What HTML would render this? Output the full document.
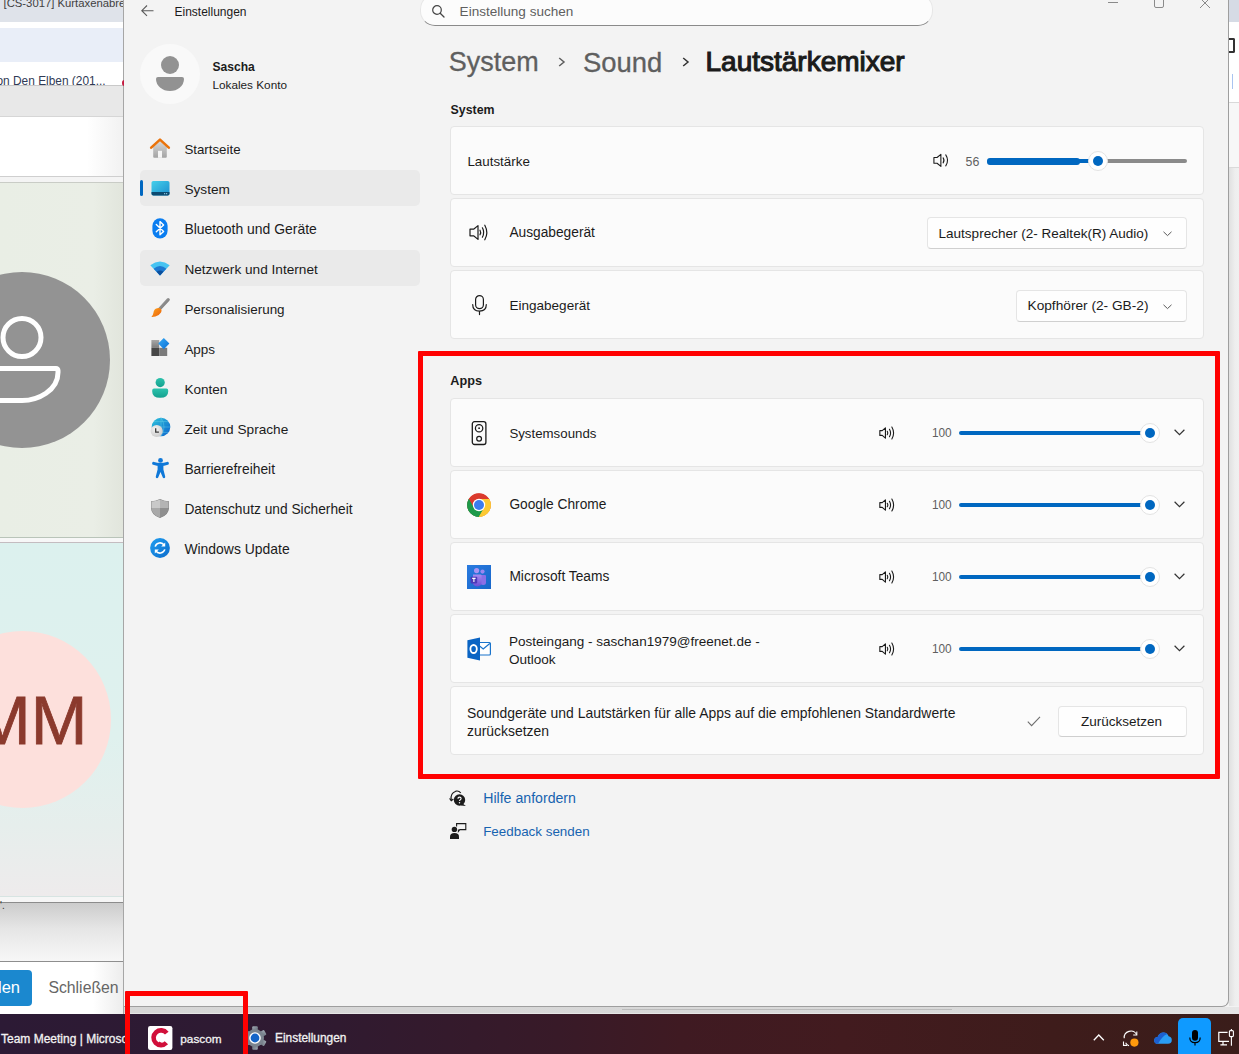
<!DOCTYPE html><html><head><meta charset="utf-8"><style>
html,body{margin:0;padding:0}
body{width:1239px;height:1054px;position:relative;overflow:hidden;background:#f3f3f3;font-family:"Liberation Sans",sans-serif}
.t{position:absolute;white-space:nowrap}
svg{overflow:visible}
</style></head><body>

<div style="position:absolute;left:0px;top:0px;width:124px;height:22px;background:#dfe3ea"></div>
<div class="t" style="left:3.50px;top:-2.07px;font-size:11.30px;line-height:11.30px;color:#3f3f3f;font-weight:400;font-family:'Liberation Sans', sans-serif;">[CS-3017] Kurtaxenabrechnung</div>
<div style="position:absolute;left:0px;top:22px;width:124px;height:6px;background:#ffffff"></div>
<div style="position:absolute;left:0px;top:28px;width:124px;height:34px;background:#e9eef8"></div>
<div style="position:absolute;left:0px;top:62px;width:124px;height:24px;background:#ffffff"></div>
<div class="t" style="left:-3.50px;top:75.73px;font-size:11.90px;line-height:11.90px;color:#2f3a55;font-weight:400;font-family:'Liberation Sans', sans-serif;">on Den Elben (201...</div>
<div style="position:absolute;left:0px;top:85px;width:124px;height:1px;background:#c9c9c9"></div>
<div style="position:absolute;left:0px;top:86px;width:124px;height:30px;background:#e8e8e8"></div>
<div style="position:absolute;left:0px;top:116px;width:124px;height:1px;background:#d6d6d6"></div>
<div style="position:absolute;left:0px;top:117px;width:124px;height:60px;background:linear-gradient(90deg,#ffffff 70%,#f1f1f1)"></div>
<div style="position:absolute;left:0px;top:176px;width:124px;height:1px;background:#cfcfcf"></div>
<div style="position:absolute;left:0px;top:177px;width:124px;height:5px;background:#f4f4f4"></div>
<div style="position:absolute;left:0px;top:182px;width:124px;height:1px;background:#c9ccc6"></div>
<div style="position:absolute;left:0px;top:183px;width:124px;height:354px;background:linear-gradient(90deg,#e9eee5 0%,#eaeee6 75%,#e1e5dc 100%)"></div>
<div style="position:absolute;left:-66px;top:272px;width:176px;height:176px;border-radius:50%;background:#939393"></div>
<svg style="position:absolute;left:-30px;top:310px" width="100" height="110" viewBox="0 0 100 110"><circle cx="52" cy="27.5" r="19" fill="none" stroke="#fff" stroke-width="5"/><path d="M-10 58.5 H86 a2 2 0 0 1 2 2 v2 c0 18 -20 28 -36 28 H-10" fill="none" stroke="#fff" stroke-width="5"/></svg>
<div style="position:absolute;left:0px;top:537px;width:124px;height:1px;background:#b9c4b9"></div>
<div style="position:absolute;left:0px;top:538px;width:124px;height:4px;background:#f7f7f7"></div>
<div style="position:absolute;left:0px;top:542px;width:124px;height:1px;background:#c4bcc0"></div>
<div style="position:absolute;left:0px;top:543px;width:124px;height:353px;background:linear-gradient(180deg,#dcf1ee 0%,#dff1ee 55%,#e6eeec 80%,#eeebec 100%)"></div>
<div style="position:absolute;left:-66px;top:631px;width:177px;height:177px;border-radius:50%;background:#fde0dc"></div>
<div class="t" style="left:-26.00px;top:685.74px;font-size:68.00px;line-height:68.00px;color:#8b3a2d;font-weight:400;font-family:'Liberation Sans', sans-serif;-webkit-text-stroke:0.8px #8b3a2d;">MM</div>
<div style="position:absolute;left:0px;top:896px;width:124px;height:1px;background:#d7e4e2"></div>
<div style="position:absolute;left:0px;top:897px;width:124px;height:5px;background:#f6f6f6"></div>
<div style="position:absolute;left:0px;top:902px;width:124px;height:1px;background:#8c8c8c"></div>
<div style="position:absolute;left:0px;top:903px;width:124px;height:58px;background:linear-gradient(180deg,#cccccc 0%,#e6e6e6 45%,#f7f7f7 100%)"></div>
<div class="t" style="left:0.00px;top:900.53px;font-size:10.00px;line-height:10.00px;color:#333;font-weight:400;font-family:'Liberation Sans', sans-serif;">'.</div>
<div style="position:absolute;left:0px;top:961px;width:124px;height:1px;background:#8e8e8e"></div>
<div style="position:absolute;left:0px;top:962px;width:124px;height:52px;background:linear-gradient(90deg,#ffffff 75%,#ececec 100%)"></div>
<div style="position:absolute;left:-10px;top:970px;width:42px;height:36px;border-radius:4px;background:#1b88cf"></div>
<div class="t" style="left:-2.00px;top:979.03px;font-size:16.50px;line-height:16.50px;color:#ffffff;font-weight:400;font-family:'Liberation Sans', sans-serif;">len</div>
<div class="t" style="left:48.40px;top:979.63px;font-size:15.80px;line-height:15.80px;color:#666666;font-weight:400;font-family:'Liberation Sans', sans-serif;">Schließen</div>
<div style="position:absolute;left:123px;top:0px;width:1px;height:1014px;background:#a6a6a6"></div>
<div style="position:absolute;left:121.5px;top:79.5px;width:5px;height:6.5px;border-radius:50%;background:#c41a40"></div>
<div style="position:absolute;left:1229px;top:0px;width:10px;height:22px;background:#d6dbe5"></div>
<div style="position:absolute;left:1229px;top:22px;width:10px;height:80px;background:#ffffff"></div>
<div style="position:absolute;left:1229px;top:102px;width:10px;height:1px;background:#d9d9d9"></div>
<div style="position:absolute;left:1229px;top:103px;width:10px;height:64px;background:#f7f7f7"></div>
<div style="position:absolute;left:1229px;top:167px;width:10px;height:1px;background:#dadada"></div>
<div style="position:absolute;left:1229px;top:168px;width:10px;height:838px;background:linear-gradient(90deg,#e0e0e0,#eeeeee 60%,#f0f0f0)"></div>
<div style="position:absolute;left:1228px;top:38px;width:5px;height:11px;border:2px solid #333;border-left:none;border-radius:0 2px 2px 0"></div>
<div style="position:absolute;left:1232px;top:74px;width:1px;height:15px;background:#a9c4f0"></div>
<div style="position:absolute;left:124px;top:1007px;width:1115px;height:7px;background:linear-gradient(90deg,#d6d6d6 0%,#d9d9d9 80%,#e6e6e6 100%)"></div>
<div style="position:absolute;left:124px;top:1013px;width:1115px;height:1px;background:#e6e6e6"></div>
<div style="position:absolute;left:622px;top:1009px;width:330px;height:1px;background:#bcbcbc"></div>
<div style="position:absolute;left:124px;top:-20px;width:1104px;height:1026px;background:#f3f3f3;border-right:1px solid #9e9e9e;border-bottom:1px solid #9e9e9e;border-radius:0 0 7px 0"></div>
<svg style="position:absolute;left:141px;top:5px" width="13" height="12" viewBox="0 0 13 12"><path d="M6 0.5 L0.8 5.7 L6 10.9 M0.8 5.7 H12.5" fill="none" stroke="#5a5a5a" stroke-width="1.1"/></svg>
<div class="t" style="left:174.50px;top:5.85px;font-size:11.99px;line-height:11.99px;color:#1b1b1b;font-weight:400;font-family:'Liberation Sans', sans-serif;">Einstellungen</div>
<div style="position:absolute;left:1108px;top:2px;width:10px;height:1px;background:#8a8a8a"></div>
<div style="position:absolute;left:1154px;top:-4px;width:8px;height:10px;border:1px solid #8a8a8a;border-radius:2px"></div>
<svg style="position:absolute;left:1200px;top:-2px" width="10" height="10" viewBox="0 0 10 10"><path d="M0 0 L10 10 M10 0 L0 10" fill="none" stroke="#8a8a8a" stroke-width="1"/></svg>
<div style="position:absolute;left:140px;top:44px;width:60px;height:60px;border-radius:50%;background:#f9f9f9"></div>
<div style="position:absolute;left:161px;top:55.5px;width:18px;height:18px;border-radius:50%;background:#929292"></div>
<div style="position:absolute;left:155.8px;top:77px;width:28.2px;height:13.7px;border-radius:2px 2px 14px 14px/2px 2px 12px 12px;background:#929292"></div>
<div class="t" style="left:212.50px;top:61.27px;font-size:12.09px;line-height:12.09px;color:#1b1b1b;font-weight:700;font-family:'Liberation Sans', sans-serif;">Sascha</div>
<div class="t" style="left:212.50px;top:78.86px;font-size:11.75px;line-height:11.75px;color:#1b1b1b;font-weight:400;font-family:'Liberation Sans', sans-serif;">Lokales Konto</div>
<div class="t" style="left:184.40px;top:143.33px;font-size:13.31px;line-height:13.31px;color:#1b1b1b;font-weight:400;font-family:'Liberation Sans', sans-serif;">Startseite</div>
<div style="position:absolute;left:140px;top:170px;width:280px;height:36px;border-radius:5px;background:#eaeaea"></div>
<div class="t" style="left:184.40px;top:183.05px;font-size:13.65px;line-height:13.65px;color:#1b1b1b;font-weight:400;font-family:'Liberation Sans', sans-serif;">System</div>
<div class="t" style="left:184.40px;top:222.81px;font-size:13.93px;line-height:13.93px;color:#1b1b1b;font-weight:400;font-family:'Liberation Sans', sans-serif;">Bluetooth und Geräte</div>
<div style="position:absolute;left:140px;top:250px;width:280px;height:36px;border-radius:5px;background:#eaeaea"></div>
<div class="t" style="left:184.40px;top:263.05px;font-size:13.65px;line-height:13.65px;color:#1b1b1b;font-weight:400;font-family:'Liberation Sans', sans-serif;">Netzwerk und Internet</div>
<div class="t" style="left:184.40px;top:303.20px;font-size:13.46px;line-height:13.46px;color:#1b1b1b;font-weight:400;font-family:'Liberation Sans', sans-serif;">Personalisierung</div>
<div class="t" style="left:184.40px;top:343.19px;font-size:13.47px;line-height:13.47px;color:#1b1b1b;font-weight:400;font-family:'Liberation Sans', sans-serif;">Apps</div>
<div class="t" style="left:184.40px;top:383.12px;font-size:13.56px;line-height:13.56px;color:#1b1b1b;font-weight:400;font-family:'Liberation Sans', sans-serif;">Konten</div>
<div class="t" style="left:184.40px;top:423.05px;font-size:13.65px;line-height:13.65px;color:#1b1b1b;font-weight:400;font-family:'Liberation Sans', sans-serif;">Zeit und Sprache</div>
<div class="t" style="left:184.40px;top:462.90px;font-size:13.82px;line-height:13.82px;color:#1b1b1b;font-weight:400;font-family:'Liberation Sans', sans-serif;">Barrierefreiheit</div>
<div class="t" style="left:184.40px;top:502.96px;font-size:13.75px;line-height:13.75px;color:#1b1b1b;font-weight:400;font-family:'Liberation Sans', sans-serif;">Datenschutz und Sicherheit</div>
<div class="t" style="left:184.40px;top:542.81px;font-size:13.93px;line-height:13.93px;color:#1b1b1b;font-weight:400;font-family:'Liberation Sans', sans-serif;">Windows Update</div>
<div style="position:absolute;left:140px;top:180px;width:3px;height:16px;background:#0067c0;border-radius:2px"></div>
<svg style="position:absolute;left:150px;top:138px" width="20" height="20" viewBox="0 0 20 20"><defs><linearGradient id="hg" x1="0" y1="0" x2="0" y2="1"><stop offset="0" stop-color="#d9d9d9"/><stop offset="1" stop-color="#a3a3a3"/></linearGradient></defs><path d="M3.2 9 L10 3 L16.8 9 V18.8 a1 1 0 0 1 -1 1 H4.2 a1 1 0 0 1 -1 -1 Z" fill="url(#hg)"/><rect x="8" y="12.8" width="4" height="7" fill="#f5f5f5"/><path d="M1.2 9.6 L10 1.6 L18.8 9.6" fill="none" stroke="#ea730b" stroke-width="2.6" stroke-linejoin="round" stroke-linecap="round"/></svg>
<svg style="position:absolute;left:150.5px;top:180.5px" width="19" height="15" viewBox="0 0 19 15"><defs><linearGradient id="sg" x1="0" y1="0" x2="1" y2="1"><stop offset="0" stop-color="#45d0ea"/><stop offset="1" stop-color="#1c8fd0"/></linearGradient></defs><rect x="0.5" y="0" width="18" height="14.5" rx="1.8" fill="url(#sg)"/><path d="M0.5 11 H18.5 V12.7 a1.8 1.8 0 0 1 -1.8 1.8 H2.3 a1.8 1.8 0 0 1 -1.8 -1.8 Z" fill="#0d4a70"/><rect x="13" y="12.2" width="1.2" height="1" fill="#9fd6ee"/><rect x="15" y="12.2" width="1.2" height="1" fill="#9fd6ee"/></svg>
<svg style="position:absolute;left:152px;top:217.5px" width="16" height="21" viewBox="0 0 16 21"><rect x="0.4" y="0.2" width="15.2" height="20.2" rx="7.6" fill="#0a7df0"/><path d="M4.3 6.6 L11.6 13.4 L8 16.8 V3.6 L11.6 7 L4.3 13.8" fill="none" stroke="#fff" stroke-width="1.4" stroke-linejoin="round" stroke-linecap="round"/></svg>
<svg style="position:absolute;left:150px;top:261px" width="20" height="15" viewBox="0 0 20 15"><path d="M0.3 4.2 Q10 -3.2 19.7 4.2 L10 14.5 Z" fill="#46c3f2"/><path d="M3.6 7.7 Q10 2.5 16.4 7.7 L10 14.5 Z" fill="#1d78d0"/><path d="M6.6 10.8 Q10 8 13.4 10.8 L10 14.5 Z" fill="#0c4f9c"/></svg>
<svg style="position:absolute;left:150.5px;top:298px" width="19" height="20" viewBox="0 0 19 20"><defs><linearGradient id="bg1" x1="0" y1="0" x2="1" y2="1"><stop offset="0" stop-color="#a6a6a6"/><stop offset="1" stop-color="#6e6e6e"/></linearGradient><linearGradient id="bg2" x1="0" y1="0" x2="1" y2="1"><stop offset="0" stop-color="#ffa21a"/><stop offset="1" stop-color="#e8600c"/></linearGradient></defs><path d="M17.2 1.6 L8.6 11" fill="none" stroke="url(#bg1)" stroke-width="3.2" stroke-linecap="round"/><path d="M6.2 10.2 Q8.6 9.6 10 11 Q11.2 12.6 10 14.6 Q8.2 17.6 4.4 18.6 Q2 19.2 0.4 19 Q2 17.4 2.4 15 Q2.8 11 6.2 10.2 Z" fill="url(#bg2)"/></svg>
<svg style="position:absolute;left:150.5px;top:338px" width="19" height="19" viewBox="0 0 19 19"><defs><linearGradient id="ag1" x1="0" y1="0" x2="0" y2="1"><stop offset="0" stop-color="#a8a8a8"/><stop offset="1" stop-color="#7c7c7c"/></linearGradient><linearGradient id="ag2" x1="0" y1="0" x2="1" y2="1"><stop offset="0" stop-color="#35aaf5"/><stop offset="1" stop-color="#0b6fd6"/></linearGradient></defs><rect x="0.4" y="2" width="7.8" height="7.8" fill="url(#ag1)"/><rect x="0.4" y="9.8" width="7.8" height="8.2" fill="#474747"/><rect x="8.2" y="9.8" width="8" height="8.2" fill="#7a7a7a"/><path d="M12.8 0 L18.4 5.6 L12.8 11.2 L7.2 5.6 Z" fill="url(#ag2)"/></svg>
<svg style="position:absolute;left:151.5px;top:378px" width="17" height="20" viewBox="0 0 17 20"><defs><linearGradient id="kg" x1="0" y1="0" x2="0" y2="1"><stop offset="0" stop-color="#2cc2ac"/><stop offset="1" stop-color="#14a08e"/></linearGradient></defs><circle cx="8.2" cy="4.6" r="4.6" fill="url(#kg)"/><path d="M0.2 12.4 a1.8 1.8 0 0 1 1.8 -1.8 H14.4 a1.8 1.8 0 0 1 1.8 1.8 V13.4 Q16.2 19.8 8.2 19.8 Q0.2 19.8 0.2 13.4 Z" fill="url(#kg)"/></svg>
<svg style="position:absolute;left:150px;top:417px" width="21" height="21" viewBox="0 0 21 21"><defs><linearGradient id="zg" x1="0" y1="0" x2="1" y2="1"><stop offset="0" stop-color="#2ec4dc"/><stop offset="1" stop-color="#0c62cc"/></linearGradient><radialGradient id="cg" cx="0.4" cy="0.35" r="0.7"><stop offset="0" stop-color="#f4f4f4"/><stop offset="1" stop-color="#c9c9c9"/></radialGradient></defs><circle cx="11" cy="10" r="9.3" fill="url(#zg)"/><path d="M11 0.7 V19.3 M1.7 10 H20.3 M4 4.6 H18 M4 15.4 H18 M11 0.7 Q17 10 11 19.3" fill="none" stroke="#6fd6ea" stroke-width="0.7" opacity="0.55"/><circle cx="6.7" cy="14" r="6.1" fill="url(#cg)"/><path d="M5.7 11.2 V15.2 H8.9" fill="none" stroke="#3a3a3a" stroke-width="1.3"/></svg>
<svg style="position:absolute;left:151.5px;top:457.5px" width="17" height="21" viewBox="0 0 17 21"><circle cx="8.5" cy="2.4" r="2.4" fill="#0f78d8"/><path d="M1.6 5.4 Q8.5 7.6 15.4 5.4" fill="none" stroke="#0f78d8" stroke-width="3" stroke-linecap="round"/><path d="M5.6 6.6 H11.4 V11.4 L13.2 18.6 Q13.5 20.2 12 20.2 Q11.1 20.2 10.8 19.4 L8.5 14 L6.2 19.4 Q5.9 20.2 5 20.2 Q3.5 20.2 3.8 18.6 L5.6 11.4 Z" fill="#0f78d8"/></svg>
<svg style="position:absolute;left:151px;top:498.8px" width="18" height="19" viewBox="0 0 18 19"><clipPath id="shc"><path d="M9 0.5 Q13.5 2.6 17.6 2.6 V8.6 Q17.6 15.6 9 18.6 Q0.4 15.6 0.4 8.6 V2.6 Q4.5 2.6 9 0.5 Z"/></clipPath><path d="M9 0 Q13.6 2.2 18 2.2 V8.6 Q18 16 9 19 Q0 16 0 8.6 V2.2 Q4.4 2.2 9 0 Z" fill="#7d7d7d"/><g clip-path="url(#shc)"><rect x="0" y="0" width="9" height="9" fill="#c9c9c9"/><rect x="9" y="0" width="9" height="9" fill="#b3b3b3"/><rect x="0" y="9" width="9" height="10" fill="#a9a9a9"/><rect x="9" y="9" width="9" height="10" fill="#8e8e8e"/></g></svg>
<svg style="position:absolute;left:150px;top:538px" width="20" height="20" viewBox="0 0 20 20"><defs><linearGradient id="wug" x1="0" y1="0" x2="1" y2="1"><stop offset="0" stop-color="#1f9ef0"/><stop offset="1" stop-color="#0c6ccc"/></linearGradient></defs><circle cx="10" cy="10" r="9.9" fill="url(#wug)"/><path d="M5.2 8.6 A5 5 0 0 1 14.2 7.2 M14.8 11.4 A5 5 0 0 1 5.8 12.8" fill="none" stroke="#fff" stroke-width="1.6"/><path d="M15.2 4.4 V8.4 H11.2 Z M4.8 15.6 V11.6 H8.8 Z" fill="#fff"/></svg>
<div style="position:absolute;left:419.5px;top:-6px;width:513px;height:32px;box-sizing:border-box;border-radius:15px;background:#fcfcfc;border:1px solid #e6e6e6;border-bottom:1px solid #8a8a8a"></div>
<svg style="position:absolute;left:431.5px;top:5px" width="13" height="13" viewBox="0 0 13 13"><circle cx="5" cy="5" r="4.3" fill="none" stroke="#444" stroke-width="1.2"/><path d="M8.2 8.2 L12 12" stroke="#444" stroke-width="1.3" stroke-linecap="round"/></svg>
<div class="t" style="left:459.60px;top:4.62px;font-size:13.56px;line-height:13.56px;color:#5f5f5f;font-weight:400;font-family:'Liberation Sans', sans-serif;">Einstellung suchen</div>
<div class="t" style="left:448.70px;top:49.16px;font-size:26.98px;line-height:26.98px;color:#5f5f5f;font-weight:400;font-family:'Liberation Sans', sans-serif;-webkit-text-stroke:0.3px #5f5f5f;">System</div>
<svg style="position:absolute;left:557.5px;top:57px" width="8" height="10" viewBox="0 0 8 10"><path d="M1.2 1 L6 5 L1.2 9" fill="none" stroke="#5f5f5f" stroke-width="1.5"/></svg>
<div class="t" style="left:583.00px;top:48.77px;font-size:27.45px;line-height:27.45px;color:#5f5f5f;font-weight:400;font-family:'Liberation Sans', sans-serif;-webkit-text-stroke:0.3px #5f5f5f;">Sound</div>
<svg style="position:absolute;left:681.5px;top:57px" width="8" height="10" viewBox="0 0 8 10"><path d="M1.2 1 L6 5 L1.2 9" fill="none" stroke="#333" stroke-width="1.5"/></svg>
<div class="t" style="left:705.50px;top:48.30px;font-size:28.00px;line-height:28.00px;color:#1b1b1b;font-weight:400;font-family:'Liberation Sans', sans-serif;-webkit-text-stroke:1.1px #1b1b1b;">Lautstärkemixer</div>
<div class="t" style="left:450.60px;top:103.53px;font-size:12.37px;line-height:12.37px;color:#1b1b1b;font-weight:700;font-family:'Liberation Sans', sans-serif;">System</div>
<div style="position:absolute;left:450px;top:126px;width:754px;height:69px;box-sizing:border-box;background:#fbfbfb;border:1px solid #e5e5e5;border-radius:4px"></div>
<div style="position:absolute;left:450px;top:198px;width:754px;height:69px;box-sizing:border-box;background:#fbfbfb;border:1px solid #e5e5e5;border-radius:4px"></div>
<div style="position:absolute;left:450px;top:270px;width:754px;height:69px;box-sizing:border-box;background:#fbfbfb;border:1px solid #e5e5e5;border-radius:4px"></div>
<div class="t" style="left:467.40px;top:154.67px;font-size:13.38px;line-height:13.38px;color:#1b1b1b;font-weight:400;font-family:'Liberation Sans', sans-serif;">Lautstärke</div>
<svg style="position:absolute;left:932.5px;top:153.3px" width="17.5" height="14.8" viewBox="0 0 20 17"><path d="M1 5.2 H4.6 L9 1.6 V15.4 L4.6 11.8 H1 Z" fill="none" stroke="#1b1b1b" stroke-width="1.25" stroke-linejoin="round"/><path d="M11.6 5.6 Q13.6 8.5 11.6 11.4 M14.6 2.2 Q18.8 8.5 14.6 14.8" fill="none" stroke="#1b1b1b" stroke-width="1.25" stroke-linecap="round"/></svg>
<div class="t" style="left:965.50px;top:155.82px;font-size:12.38px;line-height:12.38px;color:#5f5f5f;font-weight:400;font-family:'Liberation Sans', sans-serif;">56</div>
<div style="position:absolute;left:987px;top:158.3px;width:93px;height:6.3px;background:#0067c0;border-radius:3px"></div>
<div style="position:absolute;left:1000px;top:159px;width:98px;height:4px;background:#0067c0;border-radius:2px"></div>
<div style="position:absolute;left:1098px;top:159px;width:89px;height:4px;background:#8a8a8a;border-radius:2px"></div>
<div style="position:absolute;left:1088px;top:151px;width:20px;height:20px;box-sizing:border-box;border-radius:50%;background:#fff;border:1px solid #e3e3e3"></div>
<div style="position:absolute;left:1093px;top:156px;width:10px;height:10px;border-radius:50%;background:#0067c0"></div>
<svg style="position:absolute;left:468.5px;top:224px" width="20" height="18" viewBox="0 0 20 18"><path d="M1 5.2 H4.6 L9 1.6 V15.4 L4.6 11.8 H1 Z" fill="none" stroke="#1b1b1b" stroke-width="1.2" stroke-linejoin="round"/><path d="M11 6.2 Q12.4 8.5 11 10.8 M13.4 3.8 Q16 8.5 13.4 13.2 M15.8 1.2 Q19.8 8.5 15.8 15.8" fill="none" stroke="#1b1b1b" stroke-width="1.2" stroke-linecap="round"/></svg>
<div class="t" style="left:509.40px;top:226.37px;font-size:13.74px;line-height:13.74px;color:#1b1b1b;font-weight:400;font-family:'Liberation Sans', sans-serif;">Ausgabegerät</div>
<div style="position:absolute;left:926.5px;top:217px;width:260px;height:32px;box-sizing:border-box;background:#fefefe;border:1px solid #e5e5e5;border-bottom-color:#d0d0d0;border-radius:4px"></div>
<div class="t" style="left:938.50px;top:226.74px;font-size:13.54px;line-height:13.54px;color:#1b1b1b;font-weight:400;font-family:'Liberation Sans', sans-serif;">Lautsprecher (2- Realtek(R) Audio)</div>
<svg style="position:absolute;left:1163.0px;top:231px" width="9" height="6" viewBox="0 0 9 6"><path d="M0.5 0.8 L4.5 4.6 L8.5 0.8" fill="none" stroke="#5a5a5a" stroke-width="1"/></svg>
<svg style="position:absolute;left:471.5px;top:295px" width="15" height="20" viewBox="0 0 15 20"><rect x="3.6" y="0.6" width="7.8" height="13" rx="3.9" fill="none" stroke="#1b1b1b" stroke-width="1.2"/><path d="M0.7 9.6 Q0.7 16.2 7.5 16.2 Q14.3 16.2 14.3 9.6 M7.5 16.2 V19.6" fill="none" stroke="#1b1b1b" stroke-width="1.2" stroke-linecap="round"/></svg>
<div class="t" style="left:509.40px;top:298.52px;font-size:13.56px;line-height:13.56px;color:#1b1b1b;font-weight:400;font-family:'Liberation Sans', sans-serif;">Eingabegerät</div>
<div style="position:absolute;left:1015.5px;top:289.5px;width:171px;height:32px;box-sizing:border-box;background:#fefefe;border:1px solid #e5e5e5;border-bottom-color:#d0d0d0;border-radius:4px"></div>
<div class="t" style="left:1027.50px;top:299.11px;font-size:13.69px;line-height:13.69px;color:#1b1b1b;font-weight:400;font-family:'Liberation Sans', sans-serif;">Kopfhörer (2- GB-2)</div>
<svg style="position:absolute;left:1163.0px;top:303.5px" width="9" height="6" viewBox="0 0 9 6"><path d="M0.5 0.8 L4.5 4.6 L8.5 0.8" fill="none" stroke="#5a5a5a" stroke-width="1"/></svg>
<div class="t" style="left:450.30px;top:375.37px;font-size:12.68px;line-height:12.68px;color:#1b1b1b;font-weight:700;font-family:'Liberation Sans', sans-serif;">Apps</div>
<div style="position:absolute;left:450px;top:398px;width:754px;height:69px;box-sizing:border-box;background:#fbfbfb;border:1px solid #e5e5e5;border-radius:4px"></div>
<svg style="position:absolute;left:878.7px;top:425.9px" width="16.5" height="14" viewBox="0 0 20 17"><path d="M1 5.6 H3.9 L7.8 2.2 V14.8 L3.9 11.4 H1 Z" fill="none" stroke="#1b1b1b" stroke-width="1.35" stroke-linejoin="round"/><path d="M10 6.4 Q11.4 8.5 10 10.6 M12.7 3.9 Q15.4 8.5 12.7 13.1 M15.6 1.2 Q19.8 8.5 15.6 15.8" fill="none" stroke="#1b1b1b" stroke-width="1.35" stroke-linecap="round"/></svg>
<div class="t" style="left:931.90px;top:427.97px;font-size:11.85px;line-height:11.85px;color:#5f5f5f;font-weight:400;font-family:'Liberation Sans', sans-serif;">100</div>
<div style="position:absolute;left:959px;top:430.5px;width:191px;height:4px;background:#0067c0;border-radius:2px"></div>
<div style="position:absolute;left:1139.6px;top:422.50px;width:20px;height:20px;box-sizing:border-box;border-radius:50%;background:#fff;border:1px solid #e3e3e3"></div>
<div style="position:absolute;left:1144.6px;top:427.50px;width:10px;height:10px;border-radius:50%;background:#0067c0"></div>
<svg style="position:absolute;left:1173.5px;top:428.7px" width="11" height="7" viewBox="0 0 11 7"><path d="M0.6 0.8 L5.5 5.6 L10.4 0.8" fill="none" stroke="#333" stroke-width="1.2"/></svg>
<div class="t" style="left:509.40px;top:426.57px;font-size:13.27px;line-height:13.27px;color:#1b1b1b;font-weight:400;font-family:'Liberation Sans', sans-serif;">Systemsounds</div>
<div style="position:absolute;left:450px;top:470px;width:754px;height:69px;box-sizing:border-box;background:#fbfbfb;border:1px solid #e5e5e5;border-radius:4px"></div>
<svg style="position:absolute;left:878.7px;top:497.9px" width="16.5" height="14" viewBox="0 0 20 17"><path d="M1 5.6 H3.9 L7.8 2.2 V14.8 L3.9 11.4 H1 Z" fill="none" stroke="#1b1b1b" stroke-width="1.35" stroke-linejoin="round"/><path d="M10 6.4 Q11.4 8.5 10 10.6 M12.7 3.9 Q15.4 8.5 12.7 13.1 M15.6 1.2 Q19.8 8.5 15.6 15.8" fill="none" stroke="#1b1b1b" stroke-width="1.35" stroke-linecap="round"/></svg>
<div class="t" style="left:931.90px;top:499.97px;font-size:11.85px;line-height:11.85px;color:#5f5f5f;font-weight:400;font-family:'Liberation Sans', sans-serif;">100</div>
<div style="position:absolute;left:959px;top:502.5px;width:191px;height:4px;background:#0067c0;border-radius:2px"></div>
<div style="position:absolute;left:1139.6px;top:494.50px;width:20px;height:20px;box-sizing:border-box;border-radius:50%;background:#fff;border:1px solid #e3e3e3"></div>
<div style="position:absolute;left:1144.6px;top:499.50px;width:10px;height:10px;border-radius:50%;background:#0067c0"></div>
<svg style="position:absolute;left:1173.5px;top:500.7px" width="11" height="7" viewBox="0 0 11 7"><path d="M0.6 0.8 L5.5 5.6 L10.4 0.8" fill="none" stroke="#333" stroke-width="1.2"/></svg>
<div class="t" style="left:509.40px;top:498.16px;font-size:13.74px;line-height:13.74px;color:#1b1b1b;font-weight:400;font-family:'Liberation Sans', sans-serif;">Google Chrome</div>
<div style="position:absolute;left:450px;top:542px;width:754px;height:69px;box-sizing:border-box;background:#fbfbfb;border:1px solid #e5e5e5;border-radius:4px"></div>
<svg style="position:absolute;left:878.7px;top:569.9px" width="16.5" height="14" viewBox="0 0 20 17"><path d="M1 5.6 H3.9 L7.8 2.2 V14.8 L3.9 11.4 H1 Z" fill="none" stroke="#1b1b1b" stroke-width="1.35" stroke-linejoin="round"/><path d="M10 6.4 Q11.4 8.5 10 10.6 M12.7 3.9 Q15.4 8.5 12.7 13.1 M15.6 1.2 Q19.8 8.5 15.6 15.8" fill="none" stroke="#1b1b1b" stroke-width="1.35" stroke-linecap="round"/></svg>
<div class="t" style="left:931.90px;top:571.97px;font-size:11.85px;line-height:11.85px;color:#5f5f5f;font-weight:400;font-family:'Liberation Sans', sans-serif;">100</div>
<div style="position:absolute;left:959px;top:574.5px;width:191px;height:4px;background:#0067c0;border-radius:2px"></div>
<div style="position:absolute;left:1139.6px;top:566.50px;width:20px;height:20px;box-sizing:border-box;border-radius:50%;background:#fff;border:1px solid #e3e3e3"></div>
<div style="position:absolute;left:1144.6px;top:571.50px;width:10px;height:10px;border-radius:50%;background:#0067c0"></div>
<svg style="position:absolute;left:1173.5px;top:572.7px" width="11" height="7" viewBox="0 0 11 7"><path d="M0.6 0.8 L5.5 5.6 L10.4 0.8" fill="none" stroke="#333" stroke-width="1.2"/></svg>
<div class="t" style="left:509.40px;top:570.15px;font-size:13.77px;line-height:13.77px;color:#1b1b1b;font-weight:400;font-family:'Liberation Sans', sans-serif;">Microsoft Teams</div>
<div style="position:absolute;left:450px;top:614px;width:754px;height:69px;box-sizing:border-box;background:#fbfbfb;border:1px solid #e5e5e5;border-radius:4px"></div>
<svg style="position:absolute;left:878.7px;top:641.9px" width="16.5" height="14" viewBox="0 0 20 17"><path d="M1 5.6 H3.9 L7.8 2.2 V14.8 L3.9 11.4 H1 Z" fill="none" stroke="#1b1b1b" stroke-width="1.35" stroke-linejoin="round"/><path d="M10 6.4 Q11.4 8.5 10 10.6 M12.7 3.9 Q15.4 8.5 12.7 13.1 M15.6 1.2 Q19.8 8.5 15.6 15.8" fill="none" stroke="#1b1b1b" stroke-width="1.35" stroke-linecap="round"/></svg>
<div class="t" style="left:931.90px;top:643.97px;font-size:11.85px;line-height:11.85px;color:#5f5f5f;font-weight:400;font-family:'Liberation Sans', sans-serif;">100</div>
<div style="position:absolute;left:959px;top:646.5px;width:191px;height:4px;background:#0067c0;border-radius:2px"></div>
<div style="position:absolute;left:1139.6px;top:638.50px;width:20px;height:20px;box-sizing:border-box;border-radius:50%;background:#fff;border:1px solid #e3e3e3"></div>
<div style="position:absolute;left:1144.6px;top:643.50px;width:10px;height:10px;border-radius:50%;background:#0067c0"></div>
<svg style="position:absolute;left:1173.5px;top:644.7px" width="11" height="7" viewBox="0 0 11 7"><path d="M0.6 0.8 L5.5 5.6 L10.4 0.8" fill="none" stroke="#333" stroke-width="1.2"/></svg>
<div style="position:absolute;left:450px;top:686px;width:754px;height:69px;box-sizing:border-box;background:#fbfbfb;border:1px solid #e5e5e5;border-radius:4px"></div>
<svg style="position:absolute;left:471px;top:421px" width="16" height="24" viewBox="0 0 16 24"><rect x="1.3" y="0.7" width="13.6" height="22.8" rx="2.2" fill="none" stroke="#1b1b1b" stroke-width="1.3"/><circle cx="8.1" cy="7.2" r="3.7" fill="none" stroke="#1b1b1b" stroke-width="1.25"/><circle cx="8.1" cy="7.2" r="0.9" fill="#1b1b1b"/><circle cx="8.1" cy="17.8" r="2.4" fill="none" stroke="#1b1b1b" stroke-width="1.25"/></svg>
<svg style="position:absolute;left:467px;top:493px" width="24" height="24" viewBox="0 0 24 24"><circle cx="12" cy="12" r="11.8" fill="#db3a2d"/><path d="M12 12 L1.8 6.1 A11.8 11.8 0 0 0 12 23.8 Z" fill="#1e9a4a"/><path d="M12 12 L22.2 6.1 A11.8 11.8 0 0 1 12 23.8 Z" fill="#fcc934"/><path d="M12 6.6 H22.2 A11.8 11.8 0 0 0 1.8 6.1 L6.9 14.9 Z" fill="#db3a2d"/><path d="M6.9 14.9 L1.8 6.1 A11.8 11.8 0 0 0 12 23.8 L17.1 14.9 Z" fill="#1e9a4a"/><path d="M17.1 14.9 L12 23.8 A11.8 11.8 0 0 0 22.2 6.1 H12 Z" fill="#fcc934"/><circle cx="12" cy="12" r="6.2" fill="#fff"/><circle cx="12" cy="12" r="5" fill="#3b7cef"/></svg>
<svg style="position:absolute;left:467px;top:564.7px" width="24" height="24" viewBox="0 0 24 24"><defs><linearGradient id="tg" x1="0" y1="0" x2="1" y2="1"><stop offset="0" stop-color="#2a7be0"/><stop offset="1" stop-color="#1766c9"/></linearGradient><linearGradient id="tp" x1="0" y1="0" x2="0" y2="1"><stop offset="0" stop-color="#a98cf0"/><stop offset="1" stop-color="#6b4fd6"/></linearGradient></defs><rect x="0" y="0" width="24" height="24" fill="url(#tg)"/><circle cx="15.5" cy="6.6" r="2.1" fill="#9d86ee"/><circle cx="9.6" cy="5.6" r="2.6" fill="#a993f2"/><path d="M13.6 10 H18 a1 1 0 0 1 1 1 V17.5 Q19 20 16.4 20 Q14.2 20 13.6 18.5 Z" fill="#8a6fe6"/><path d="M6 9.4 H13.4 a1.2 1.2 0 0 1 1.2 1.2 V17.6 Q14.6 21.4 10.2 21.4 Q6 21.4 6 17.6 Z" fill="url(#tp)"/><rect x="3.6" y="11.8" width="6.6" height="6.6" rx="0.8" fill="#4b3ab8"/><path d="M5.2 13.4 H8.6 M6.9 13.4 V17" stroke="#fff" stroke-width="1.1"/></svg>
<svg style="position:absolute;left:467px;top:637px" width="24" height="24" viewBox="0 0 24 24"><rect x="9" y="5.5" width="14.4" height="12.5" rx="1" fill="#fff" stroke="#1a74cc" stroke-width="1.2"/><path d="M9.6 6.5 L16.2 12 L22.8 6.5" fill="none" stroke="#1a74cc" stroke-width="1.2"/><path d="M0.4 3.2 L13 0.4 V23.6 L0.4 20.8 Z" fill="#0a64c4"/><ellipse cx="6.6" cy="12" rx="3.2" ry="4" fill="none" stroke="#fff" stroke-width="1.8"/></svg>
<div class="t" style="left:509.00px;top:634.94px;font-size:13.54px;line-height:13.54px;color:#1b1b1b;font-weight:400;font-family:'Liberation Sans', sans-serif;">Posteingang - saschan1979@freenet.de -</div>
<div class="t" style="left:509.00px;top:653.14px;font-size:13.54px;line-height:13.54px;color:#1b1b1b;font-weight:400;font-family:'Liberation Sans', sans-serif;">Outlook</div>
<div class="t" style="left:467.00px;top:706.81px;font-size:13.93px;line-height:13.93px;color:#1b1b1b;font-weight:400;font-family:'Liberation Sans', sans-serif;">Soundgeräte und Lautstärken für alle Apps auf die empfohlenen Standardwerte</div>
<div class="t" style="left:467.00px;top:724.81px;font-size:13.93px;line-height:13.93px;color:#1b1b1b;font-weight:400;font-family:'Liberation Sans', sans-serif;">zurücksetzen</div>
<svg style="position:absolute;left:1026.5px;top:716px" width="14" height="11" viewBox="0 0 14 11"><path d="M0.8 5.6 L4.6 9.6 L13 0.8" fill="none" stroke="#6e6e6e" stroke-width="1.1"/></svg>
<div style="position:absolute;left:1057.5px;top:705.5px;width:129px;height:31px;box-sizing:border-box;background:#fefefe;border:1px solid #e5e5e5;border-bottom-color:#cfcfcf;border-radius:4px"></div>
<div class="t" style="left:1081.00px;top:714.77px;font-size:13.50px;line-height:13.50px;color:#1b1b1b;font-weight:400;font-family:'Liberation Sans', sans-serif;">Zurücksetzen</div>
<svg style="position:absolute;left:450px;top:789.5px" width="17" height="17" viewBox="0 0 17 17"><path d="M1.2 10.2 Q0 3.2 5.8 1.2 Q8.8 0.4 10.8 3" fill="none" stroke="#1b1b1b" stroke-width="1.2"/><path d="M-0.4 8.4 L1.2 10.8 L3.4 9" fill="none" stroke="#1b1b1b" stroke-width="1.1" stroke-linejoin="round"/><circle cx="9.5" cy="10" r="5.7" fill="#1b1b1b"/><path d="M12.6 13.4 L15.9 16.1 L11 15.4 Z" fill="#1b1b1b"/><path d="M8 8.7 Q8 7.1 9.5 7.1 Q11.1 7.1 11.1 8.5 Q11.1 9.4 10.1 9.9 Q9.5 10.2 9.5 11.1" fill="none" stroke="#fff" stroke-width="1.1"/><circle cx="9.5" cy="12.8" r="0.75" fill="#fff"/></svg>
<div class="t" style="left:483.20px;top:790.72px;font-size:14.15px;line-height:14.15px;color:#1763b0;font-weight:400;font-family:'Liberation Sans', sans-serif;">Hilfe anfordern</div>
<svg style="position:absolute;left:450px;top:823px" width="17" height="17" viewBox="0 0 17 17"><circle cx="4.4" cy="6.4" r="2.7" fill="#1b1b1b"/><path d="M0 15.9 V13.8 Q0 10.1 4.5 10.1 Q9 10.1 9 13.8 V15.9 Z" fill="#1b1b1b"/><path d="M6.6 3.4 V0.6 H15.8 V6.6 H9.8 L8.4 8.4 V6.6" fill="none" stroke="#1b1b1b" stroke-width="1.1" stroke-linejoin="miter"/></svg>
<div class="t" style="left:483.20px;top:824.96px;font-size:13.40px;line-height:13.40px;color:#1763b0;font-weight:400;font-family:'Liberation Sans', sans-serif;">Feedback senden</div>
<div style="position:absolute;left:0px;top:1014px;width:1239px;height:40px;background:linear-gradient(90deg,#2c1a35 0%,#2f1a31 25%,#381a28 45%,#3f1a22 55%,#421b1f 68%,#3e1c1b 85%,#3a1d1a 100%)"></div>
<div style="position:absolute;left:0;top:1014px;width:125px;height:40px;overflow:hidden">
<div class="t" style="left:1.00px;top:18.84px;font-size:12.00px;line-height:12.00px;color:#f2f2f2;font-weight:400;font-family:'Liberation Sans', sans-serif;-webkit-text-stroke:0.3px #f2f2f2;">Team Meeting | Microsoft Teams</div>
</div>
<svg style="position:absolute;left:147.5px;top:1026px" width="24.5" height="24" viewBox="0 0 24.5 24"><rect x="0" y="0" width="24.4" height="24" rx="2.2" fill="#ffffff"/><path d="M18.8 7.2 A7.4 7.4 0 1 0 18.4 16.8" fill="none" stroke="#d10f3a" stroke-width="4.6"/><path d="M11.2 15.6 L9.6 20 L14.6 17.6 Z" fill="#d10f3a"/><circle cx="12.6" cy="12" r="3" fill="#fff"/></svg>
<div class="t" style="left:180.30px;top:1033.51px;font-size:11.80px;line-height:11.80px;color:#f2f2f2;font-weight:400;font-family:'Liberation Sans', sans-serif;-webkit-text-stroke:0.3px #f2f2f2;">pascom</div>
<svg style="position:absolute;left:243px;top:1026px" width="24" height="24" viewBox="0 0 24 24"><defs><linearGradient id="gg" x1="0" y1="0" x2="1" y2="1"><stop offset="0" stop-color="#a3acb6"/><stop offset="1" stop-color="#5e6772"/></linearGradient></defs><g transform="translate(12,12)"><rect x="-2.8" y="-11.8" width="5.6" height="5" rx="1" transform="rotate(0)" fill="url(#gg)"/><rect x="-2.8" y="-11.8" width="5.6" height="5" rx="1" transform="rotate(60)" fill="url(#gg)"/><rect x="-2.8" y="-11.8" width="5.6" height="5" rx="1" transform="rotate(120)" fill="url(#gg)"/><rect x="-2.8" y="-11.8" width="5.6" height="5" rx="1" transform="rotate(180)" fill="url(#gg)"/><rect x="-2.8" y="-11.8" width="5.6" height="5" rx="1" transform="rotate(240)" fill="url(#gg)"/><rect x="-2.8" y="-11.8" width="5.6" height="5" rx="1" transform="rotate(300)" fill="url(#gg)"/><circle cx="0" cy="0" r="9" fill="#7b848f"/><circle cx="0" cy="0" r="5.8" fill="#ffffff"/><circle cx="0" cy="0" r="4.4" fill="#1565c8"/></g></svg>
<div class="t" style="left:275.00px;top:1033.43px;font-size:11.90px;line-height:11.90px;color:#f2f2f2;font-weight:400;font-family:'Liberation Sans', sans-serif;-webkit-text-stroke:0.3px #f2f2f2;">Einstellungen</div>
<svg style="position:absolute;left:1092.5px;top:1034px" width="12" height="7" viewBox="0 0 12 7"><path d="M0.8 6.2 L5.8 1 L10.8 6.2" fill="none" stroke="#fff" stroke-width="1.3"/></svg>
<svg style="position:absolute;left:1121.5px;top:1029.5px" width="18" height="17" viewBox="0 0 18 17"><path d="M2.2 8.2 A6.6 6.6 0 0 1 14.6 4.6" fill="none" stroke="#fff" stroke-width="1.1"/><path d="M14.8 1.4 V5 H11.2" fill="none" stroke="#fff" stroke-width="1.1"/><path d="M3.6 12.8 A6.6 6.6 0 0 0 7 15.8" fill="none" stroke="#fff" stroke-width="1.1"/><path d="M1 11.6 V15.4 H4.6" fill="none" stroke="#fff" stroke-width="1.1" transform="translate(0.5,0)"/><circle cx="12.4" cy="12.6" r="4.1" fill="#ff9a0d"/></svg>
<svg style="position:absolute;left:1153.5px;top:1031.5px" width="18" height="12" viewBox="0 0 18 12"><path d="M4 11.8 Q0.2 11.8 0.2 8.4 Q0.2 5.2 3.6 5 Q5.2 0.4 9.6 0.4 Q13.4 0.4 14.6 4.2 Q17.8 4.6 17.8 8 Q17.8 11.8 14 11.8 Z" fill="#2a9df4"/><path d="M3.6 5 Q5.2 0.4 9.6 0.4 Q12 0.4 13.4 2 Q8 4 4 11.8 Q0.2 11.8 0.2 8.4 Q0.2 5.2 3.6 5 Z" fill="#1c5fd0"/></svg>
<div style="position:absolute;left:1178px;top:1018px;width:32.5px;height:40px;background:#0f9aff;border-radius:5px"></div>
<svg style="position:absolute;left:1188.5px;top:1030px" width="12" height="16" viewBox="0 0 12 16"><rect x="3" y="0" width="6" height="10.8" rx="3" fill="#000"/><path d="M0.8 7.4 Q0.8 12.6 6 12.6 Q11.2 12.6 11.2 7.4 M6 12.6 V15.6" fill="none" stroke="#000" stroke-width="1.2"/></svg>
<svg style="position:absolute;left:1218px;top:1029px" width="16.5" height="17" viewBox="0 0 16.5 17"><path d="M9.6 3.4 H0.8 V12.4 H11" fill="none" stroke="#fff" stroke-width="1.2"/><path d="M5 12.4 V15.6 M2.4 15.8 H9" fill="none" stroke="#fff" stroke-width="1.2"/><rect x="11.4" y="1.6" width="4" height="6" rx="1" fill="none" stroke="#fff" stroke-width="1.1"/><path d="M13.4 0 V1.6 M13.4 7.6 V16.8" stroke="#fff" stroke-width="1.1"/></svg>
<div style="position:absolute;left:418px;top:351px;width:801.5px;height:428px;box-sizing:border-box;border:5px solid #ff0000;border-radius:1px"></div>
<div style="position:absolute;left:125px;top:991px;width:123px;height:80px;box-sizing:border-box;border:5px solid #ff0000;border-radius:1px"></div>
</body></html>
